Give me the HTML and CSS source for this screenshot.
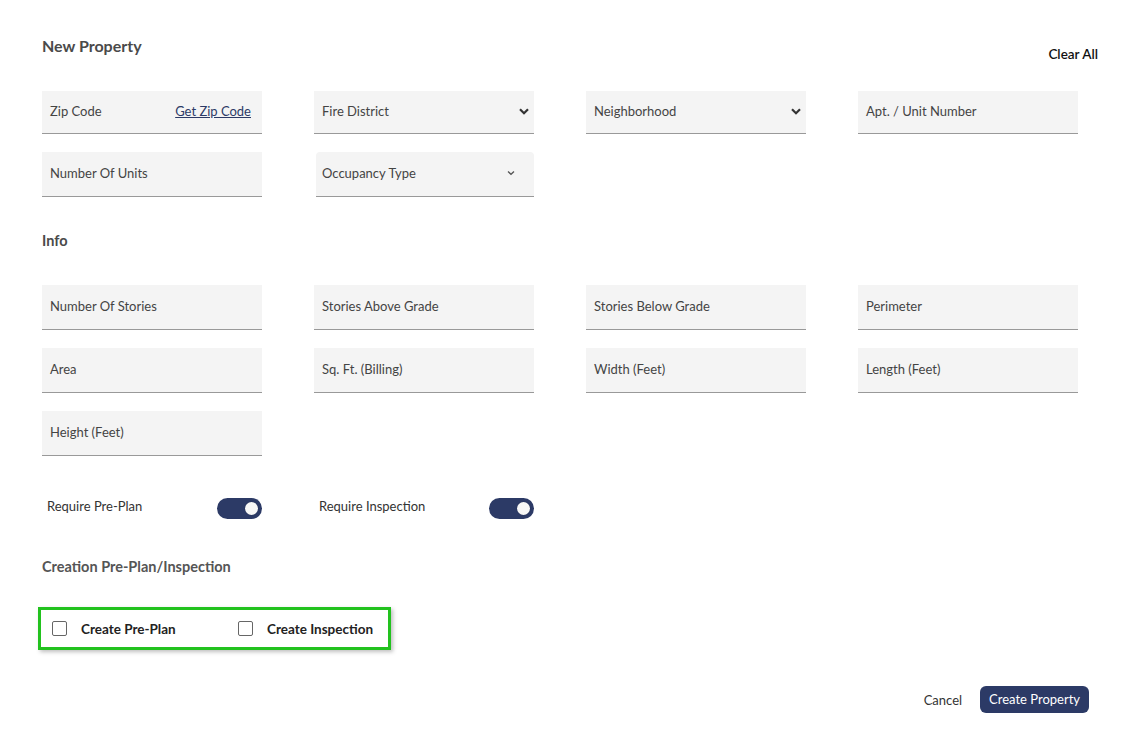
FILE: index.html
```html
<!DOCTYPE html>
<html>
<head>
<meta charset="utf-8">
<link rel="stylesheet" href="styles.css">
</head>
<body>
<div class="page">
  <div class="header">
    <h1 class="title">New Property</h1>
    <span class="clear-all">Clear All</span>
  </div>

  <div class="grid">
    <div class="field short">
      <span>Zip Code</span>
      <a class="link">Get Zip Code</a>
    </div>
    <div class="field short select">
      <span>Fire District</span>
      <svg class="chev bold" width="10" height="7" viewBox="0 0 10 7"><path d="M1 1.2 L5 5.2 L9 1.2" fill="none" stroke="#333" stroke-width="2.2"/></svg>
    </div>
    <div class="field short select">
      <span>Neighborhood</span>
      <svg class="chev bold" width="10" height="7" viewBox="0 0 10 7"><path d="M1 1.2 L5 5.2 L9 1.2" fill="none" stroke="#333" stroke-width="2.2"/></svg>
    </div>
    <div class="field short">
      <span>Apt. / Unit Number</span>
    </div>
  </div>

  <div class="grid">
    <div class="field">
      <span>Number Of Units</span>
    </div>
    <div class="field select rounded">
      <span>Occupancy Type</span>
      <svg class="chev thin" width="8" height="6" viewBox="0 0 8 6"><path d="M1 1.5 L4 4.3 L7 1.5" fill="none" stroke="#555" stroke-width="1.3"/></svg>
    </div>
  </div>

  <h2 class="section">Info</h2>

  <div class="grid rows">
    <div class="field"><span>Number Of Stories</span></div>
    <div class="field"><span>Stories Above Grade</span></div>
    <div class="field"><span>Stories Below Grade</span></div>
    <div class="field"><span>Perimeter</span></div>
    <div class="field"><span>Area</span></div>
    <div class="field"><span>Sq. Ft. (Billing)</span></div>
    <div class="field"><span>Width (Feet)</span></div>
    <div class="field"><span>Length (Feet)</span></div>
    <div class="field"><span>Height (Feet)</span></div>
  </div>

  <div class="grid toggles">
    <div class="toggle-item">
      <span>Require Pre-Plan</span>
      <span class="toggle"><span class="knob"></span></span>
    </div>
    <div class="toggle-item">
      <span>Require Inspection</span>
      <span class="toggle"><span class="knob"></span></span>
    </div>
  </div>

  <h2 class="section creation">Creation Pre-Plan/Inspection</h2>

  <div class="checks">
    <label class="check first"><span class="box"></span><span>Create Pre-Plan</span></label>
    <label class="check"><span class="box"></span><span>Create Inspection</span></label>
  </div>

  <div class="actions">
    <span class="cancel">Cancel</span>
    <span class="primary">Create Property</span>
  </div>
</div>
</body>
</html>
```

FILE: styles.css
```css
* { box-sizing: border-box; }

body {
  margin: 0;
  background: #ffffff;
  font-family: Lato, "Open Sans", Arial, sans-serif;
  color: #444;
}

.page {
  width: 1098px;
  padding: 34px 0 0 42px;
}

.header {
  display: flex;
  justify-content: space-between;
  align-items: flex-start;
  height: 57px;
}

.title {
  margin: 0;
  font-size: 16px;
  line-height: 24px;
  font-weight: 700;
  color: #4a4a4a;
}

.clear-all {
  margin-top: 11px;
  font-size: 13.5px;
  line-height: 18px;
  font-weight: 600;
  color: #111;
}

.grid {
  display: grid;
  grid-template-columns: repeat(4, 220px);
  column-gap: 52px;
  row-gap: 18px;
  margin-bottom: 18px;
}

.field {
  height: 45px;
  background: #f4f4f4;
  border-bottom: 1px solid #999;
  display: flex;
  align-items: center;
  justify-content: space-between;
  padding: 0 11px 2px 8px;
  font-size: 13px;
  color: #444;
}

.field.short { height: 43px; }

.field.select { padding-right: 5px; }

.field.rounded {
  margin-left: 2px;
  border-radius: 4px 4px 0 0;
  padding-right: 19px;
  padding-left: 6px;
}

.link {
  color: #2c3a66;
  text-decoration: underline;
  font-size: 13px;
}

.chev { display: block; }

.section {
  margin: 32px 0 32px;
  font-size: 14.5px;
  line-height: 24px;
  font-weight: 700;
  color: #4a4a4a;
}

.grid.rows { margin-bottom: 0; }

.toggles {
  margin-top: 42px;
  margin-bottom: 0;
}

.toggle-item {
  display: flex;
  justify-content: space-between;
  align-items: center;
  height: 21px;
  padding-left: 5px;
  font-size: 13px;
  color: #333;
}

.toggle-item > span:first-child { margin-top: -5px; }

.toggle {
  width: 45px;
  height: 21px;
  border-radius: 11px;
  background: #2c3a66;
  display: flex;
  align-items: center;
  justify-content: flex-end;
  padding-right: 4px;
}

.knob {
  width: 13px;
  height: 13px;
  border-radius: 50%;
  background: #f7f7f7;
  box-shadow: 0 0 1px rgba(0,0,0,0.3);
}

.section.creation {
  margin: 36px 0 28px;
  color: #555;
}

.checks {
  display: flex;
  align-items: center;
  width: 353px;
  height: 43px;
  margin-left: -4px;
  border: 3px solid #22c21e;
  box-shadow: 2px 2px 4px rgba(0,0,0,0.25);
  padding-left: 11px;
}

.check {
  display: flex;
  align-items: center;
  gap: 14px;
  font-size: 13.5px;
  font-weight: 700;
  color: #222;
}

.check.first { width: 186px; }

.box {
  width: 15px;
  height: 15px;
  border: 1px solid #666;
  border-radius: 2px;
  background: #fff;
}

.actions {
  display: flex;
  justify-content: flex-end;
  align-items: center;
  gap: 18px;
  margin-top: 36px;
  padding-right: 9px;
}

.cancel {
  font-size: 13px;
  color: #333;
}

.primary {
  display: inline-block;
  height: 27px;
  line-height: 27px;
  padding: 0 9px;
  border-radius: 6px;
  background: #2c3a66;
  color: #fff;
  font-size: 13px;
}
```
